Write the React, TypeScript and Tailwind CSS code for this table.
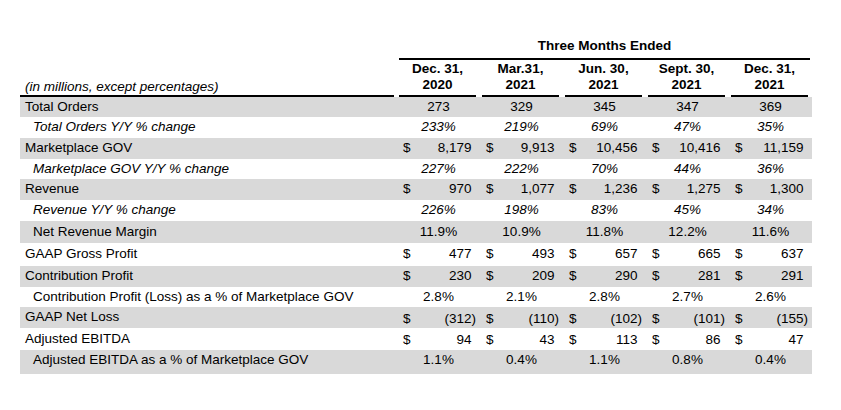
type Row = {
  label: string;
  kind: "money" | "pct";
  indent?: boolean;
  italic?: boolean;
  shade: boolean;
  h: string;
  drop?: boolean;
  values: string[];
};

const rows: Row[] = [
  { label: "Total Orders", kind: "pct", shade: true, h: "h-[20px]", values: ["273", "329", "345", "347", "369"] },
  { label: "Total Orders Y/Y % change", kind: "pct", indent: true, italic: true, shade: false, h: "h-[21px]", values: ["233%", "219%", "69%", "47%", "35%"] },
  { label: "Marketplace GOV", kind: "money", shade: true, h: "h-[21px]", values: ["8,179", "9,913", "10,456", "10,416", "11,159"] },
  { label: "Marketplace GOV Y/Y % change", kind: "pct", indent: true, italic: true, shade: false, h: "h-[20px]", values: ["227%", "222%", "70%", "44%", "36%"] },
  { label: "Revenue", kind: "money", shade: true, h: "h-[21px]", values: ["970", "1,077", "1,236", "1,275", "1,300"] },
  { label: "Revenue Y/Y % change", kind: "pct", indent: true, italic: true, shade: false, h: "h-[21px]", values: ["226%", "198%", "83%", "45%", "34%"] },
  { label: "Net Revenue Margin", kind: "pct", indent: true, shade: true, h: "h-[22px]", values: ["11.9%", "10.9%", "11.8%", "12.2%", "11.6%"] },
  { label: "GAAP Gross Profit", kind: "money", shade: false, h: "h-[23px]", values: ["477", "493", "657", "665", "637"] },
  { label: "Contribution Profit", kind: "money", shade: true, h: "h-[21px]", values: ["230", "209", "290", "281", "291"] },
  { label: "Contribution Profit (Loss) as a % of Marketplace GOV", kind: "pct", indent: true, shade: false, h: "h-[20px]", values: ["2.8%", "2.1%", "2.8%", "2.7%", "2.6%"] },
  { label: "GAAP Net Loss", kind: "money", shade: true, h: "h-[21px]", drop: true, values: ["(312", "(110", "(102", "(101", "(155"] },
  { label: "Adjusted EBITDA", kind: "money", shade: false, h: "h-[22px]", drop: true, values: ["94", "43", "113", "86", "47"] },
  { label: "Adjusted EBITDA as a % of Marketplace GOV", kind: "pct", indent: true, shade: true, h: "h-[24px] pb-[4px]", values: ["1.1%", "0.4%", "1.1%", "0.8%", "0.4%"] },
];

const dates = [
  ["Dec. 31,", "2020"],
  ["Mar.31,", "2021"],
  ["Jun. 30,", "2021"],
  ["Sept. 30,", "2021"],
  ["Dec. 31,", "2021"],
];

function DataCell({ row, v }: { row: Row; v: string }) {
  if (row.kind === "money") {
    const neg = v.startsWith("(");
    return (
      <div className={`w-[83px] flex justify-between pl-[6px] pr-[4px] ${row.drop ? "pt-[3px]" : ""}`}>
        <span>$</span>
        <span>
          {v}
          <span className={neg ? "" : "invisible"}>)</span>
        </span>
      </div>
    );
  }
  return <div className={`w-[83px] text-center ${row.italic ? "italic" : ""}`}>{v}</div>;
}

export default function App() {
  return (
    <div className="w-[841px] h-[410px] bg-white text-black text-[13.5px] font-['Liberation_Sans',Arial,sans-serif] pt-[38px] pl-[20px]">
      <div className="w-[792px]">
        {/* header */}
        <div className="flex">
          <div className="w-[377px]" />
          <div className="w-[415px] pl-[2px] pr-[2px]">
            <div className="h-[22px] leading-[16px] text-center font-bold border-b-2 border-black">Three Months Ended</div>
          </div>
        </div>
        <div className="flex">
          <div className="w-[377px] pr-[3px] flex">
            <div className="flex-1 flex items-end border-b-2 border-black pl-[5px] italic leading-[16px]">
              (in millions, except percentages)
            </div>
          </div>
          {dates.map((d, i) => (
            <div key={i} className="w-[83px] pl-[2px] pr-[4px]">
              <div className="border-b-2 border-black pt-[1px] pb-[2px] text-center font-bold leading-[16px]">
                <div>{d[0]}</div>
                <div>{d[1]}</div>
              </div>
            </div>
          ))}
        </div>

        {/* body */}
        {rows.map((r, i) => (
          <div key={i} className={`flex items-center ${r.h} ${r.shade ? "bg-[#d9d9d9]" : ""}`}>
            <div className={`w-[377px] ${r.indent ? "pl-[13px]" : "pl-[5px]"} ${r.italic ? "italic" : ""}`}>{r.label}</div>
            {r.values.map((v, j) => (
              <DataCell key={j} row={r} v={v} />
            ))}
          </div>
        ))}
      </div>
    </div>
  );
}
